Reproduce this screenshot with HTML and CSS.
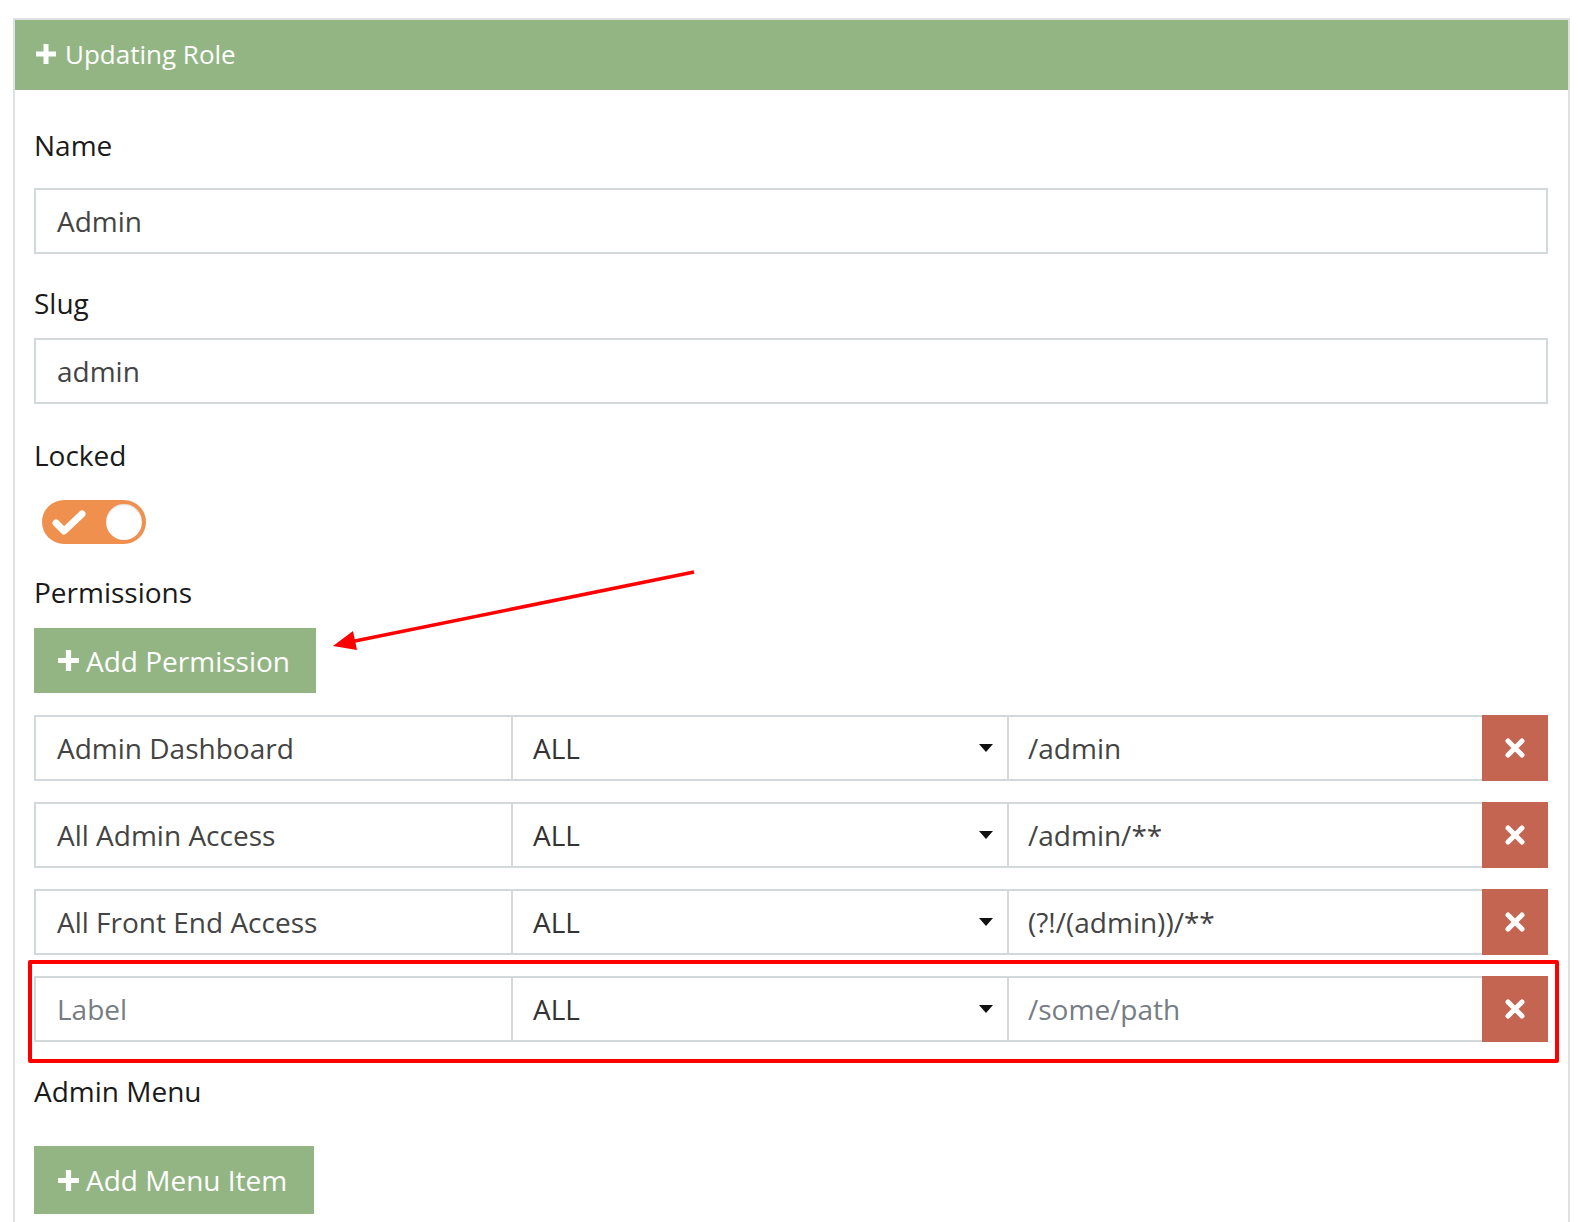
FILE: index.html
```html
<!DOCTYPE html>
<html>
<head>
<meta charset="utf-8">
<title>Updating Role</title>
<link rel="stylesheet" href="styles.css">
</head>
<body>
<div class="panel">
  <div class="panel-heading">
    <svg class="plus" viewBox="0 0 22 22" width="22" height="22"><path d="M11 1v20M1 11h20" stroke="#fff" stroke-width="5"/></svg>
    <span>Updating Role</span>
  </div>
  <div class="panel-body">
    <label class="lbl lbl-name">Name</label>
    <div class="field">Admin</div>
    <label class="lbl lbl-slug">Slug</label>
    <div class="field field-slug">admin</div>
    <label class="lbl lbl-locked">Locked</label>
    <div class="toggle">
      <svg class="toggle-check" viewBox="0 0 36 28" width="36" height="28"><polyline points="5,15 13,23 31,6" fill="none" stroke="#fff" stroke-width="7" stroke-linecap="round" stroke-linejoin="round"/></svg>
      <span class="knob"></span>
    </div>
    <label class="lbl lbl-perm">Permissions</label>
    <button class="btn btn-perm"><svg viewBox="0 0 22 22" width="23" height="23"><path d="M11 1v20M1 11h20" stroke="#fff" stroke-width="5"/></svg><span>Add Permission</span></button>

    <div class="perm-row">
      <div class="cell cell-label">Admin Dashboard</div>
      <div class="cell cell-select"><span>ALL</span><span class="caret"></span></div>
      <div class="cell cell-path">/admin</div>
      <div class="del"><svg viewBox="0 0 20 20" width="20" height="20"><path d="M3 3l14 14M17 3L3 17" stroke="#fff" stroke-width="5" stroke-linecap="round"/></svg></div>
    </div>
    <div class="perm-row">
      <div class="cell cell-label">All Admin Access</div>
      <div class="cell cell-select"><span>ALL</span><span class="caret"></span></div>
      <div class="cell cell-path">/admin/**</div>
      <div class="del"><svg viewBox="0 0 20 20" width="20" height="20"><path d="M3 3l14 14M17 3L3 17" stroke="#fff" stroke-width="5" stroke-linecap="round"/></svg></div>
    </div>
    <div class="perm-row">
      <div class="cell cell-label">All Front End Access</div>
      <div class="cell cell-select"><span>ALL</span><span class="caret"></span></div>
      <div class="cell cell-path">(?!/(admin))/**</div>
      <div class="del"><svg viewBox="0 0 20 20" width="20" height="20"><path d="M3 3l14 14M17 3L3 17" stroke="#fff" stroke-width="5" stroke-linecap="round"/></svg></div>
    </div>
    <div class="perm-row perm-new">
      <div class="cell cell-label placeholder">Label</div>
      <div class="cell cell-select"><span>ALL</span><span class="caret"></span></div>
      <div class="cell cell-path placeholder">/some/path</div>
      <div class="del"><svg viewBox="0 0 20 20" width="20" height="20"><path d="M3 3l14 14M17 3L3 17" stroke="#fff" stroke-width="5" stroke-linecap="round"/></svg></div>
      <div class="highlight"></div>
    </div>

    <label class="lbl lbl-menu">Admin Menu</label>
    <button class="btn btn-menu"><svg viewBox="0 0 22 22" width="23" height="23"><path d="M11 1v20M1 11h20" stroke="#fff" stroke-width="5"/></svg><span>Add Menu Item</span></button>
  </div>
</div>
<svg class="annot-arrow" width="1578" height="1222" viewBox="0 0 1578 1222">
  <line x1="694" y1="572" x2="350" y2="642" stroke="#f00" stroke-width="3.5"/>
  <polygon points="333,646 353,631 357,650" fill="#f00"/>
</svg>
</body>
</html>
```

FILE: styles.css
```css
html, body {
  margin: 0;
  padding: 0;
  background: #fff;
}
body {
  font-family: "Open Sans", "Noto Sans", sans-serif;
  color: #1f1f1f;
  position: relative;
  height: 1222px;
  overflow: hidden;
}
.panel {
  margin: 18px 8px 0 13px;
  border: 2px solid #dde1e4;
  border-bottom: none;
}
.panel-heading {
  height: 70px;
  box-sizing: border-box;
  background: #93b584;
  color: #fff;
  display: flex;
  align-items: center;
  padding: 0 0 3px 20px;
  font-size: 26px;
}
.panel-heading .plus {
  margin-right: 8px;
  flex: none;
}
.panel-body {
  padding: 0 20px 40px 19px;
}
.lbl {
  display: block;
  font-size: 28px;
  line-height: 40px;
  height: 40px;
  color: #1a1a1a;
}
.lbl-name { margin-top: 35px; margin-bottom: 23px; }
.lbl-slug { margin-top: 29px; margin-bottom: 15px; }
.lbl-locked { margin-top: 31px; margin-bottom: 25px; }
.lbl-perm { margin-top: 28px; margin-bottom: 16px; }
.lbl-menu { margin-top: 29px; margin-bottom: 35px; }

.field {
  height: 66px;
  box-sizing: border-box;
  border: 2px solid #d3d8db;
  padding: 0 21px;
  display: flex;
  align-items: center;
  font-size: 28px;
  color: #444;
}

.toggle {
  margin-left: 8px;
  width: 104px;
  height: 44px;
  border-radius: 22px;
  background: #f0904f;
  display: flex;
  align-items: center;
  justify-content: space-between;
  padding: 0 4px 0 9px;
  box-sizing: border-box;
}
.toggle-check { display: block; }
.knob {
  width: 36px;
  height: 36px;
  border-radius: 50%;
  background: #fff;
  box-shadow: inset 0 1px 2px rgba(0,0,0,0.15);
}

.btn {
  display: flex;
  align-items: center;
  border: none;
  background: #93b584;
  color: #fff;
  font-family: inherit;
  font-size: 28px;
  padding: 0 23px;
  margin: 0;
}
.btn svg { margin-right: 6px; flex: none; }
.btn-perm { height: 65px; width: 282px; margin-bottom: 22px; }
.btn-menu { height: 68px; width: 280px; }

.perm-row {
  display: grid;
  grid-template-columns: 477px 496px 1fr 66px;
  height: 66px;
  margin-bottom: 21px;
}
.perm-row.perm-new {
  position: relative;
  margin-bottom: 0;
}
.cell {
  box-sizing: border-box;
  border: 2px solid #d3d8db;
  border-right: none;
  display: flex;
  align-items: center;
  font-size: 28px;
  color: #444;
  padding: 0 20px;
}
.cell-label { padding-left: 21px; }
.cell-select {
  justify-content: space-between;
  padding-right: 14px;
  color: #333;
}
.cell-path { padding-left: 19px; }
.placeholder { color: #767c82; }
.caret {
  width: 0;
  height: 0;
  border-left: 7.5px solid transparent;
  border-right: 7.5px solid transparent;
  border-top: 8px solid #111;
}
.del {
  background: #c46551;
  display: flex;
  align-items: center;
  justify-content: center;
}
.highlight {
  position: absolute;
  left: -6px;
  right: -11px;
  top: -16px;
  bottom: -21px;
  border: 4px solid #f00;
  border-radius: 2px;
  pointer-events: none;
}
.annot-arrow {
  position: absolute;
  left: 0;
  top: 0;
  pointer-events: none;
}
```
